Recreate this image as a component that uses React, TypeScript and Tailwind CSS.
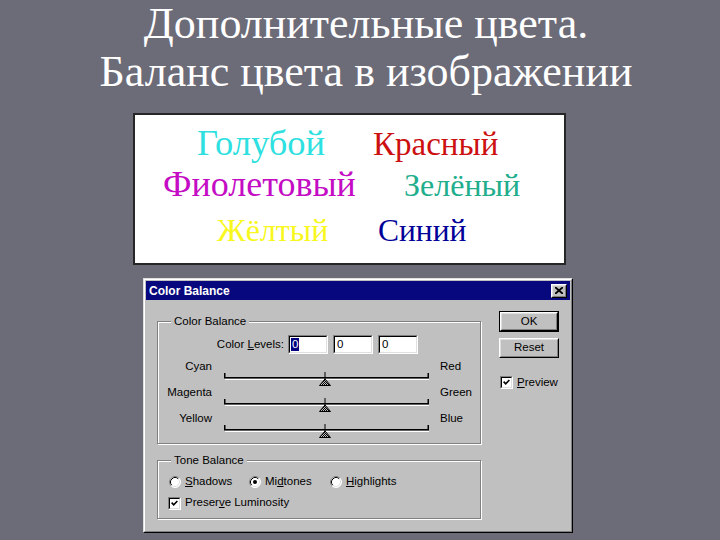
import React from "react";

function Raised({ children, className = "" }: { children: React.ReactNode; className?: string }) {
  return (
    <div className={`border border-t-white border-l-white border-r-black border-b-black ${className}`}>
      <div className="flex h-full w-full items-center justify-center border border-t-[#dfdfdf] border-l-[#dfdfdf] border-r-[#808080] border-b-[#808080] bg-[#c0c0c0]">
        {children}
      </div>
    </div>
  );
}

function Sunken({ children, className = "" }: { children: React.ReactNode; className?: string }) {
  return (
    <div className={`border border-t-[#808080] border-l-[#808080] border-r-white border-b-white ${className}`}>
      <div className="flex h-full w-full items-center border border-t-black border-l-black border-r-[#dfdfdf] border-b-[#dfdfdf] bg-white">
        {children}
      </div>
    </div>
  );
}

function Check() {
  return (
    <Sunken className="h-[13px] w-[13px] shrink-0">
      <svg width="11" height="11" viewBox="0 0 11 11">
        <polyline points="2,4.5 4.5,7 9,2.5" fill="none" stroke="#000" strokeWidth="2" strokeLinejoin="miter" />
      </svg>
    </Sunken>
  );
}

function Radio({ on = false }: { on?: boolean }) {
  return (
    <svg width="12" height="12" viewBox="0 0 12 12" className="shrink-0">
      <circle cx="6" cy="6" r="5.5" fill="#fff" />
      <path d="M2.11 9.89 A5.5 5.5 0 0 1 9.89 2.11" fill="none" stroke="#808080" />
      <path d="M9.89 2.11 A5.5 5.5 0 0 1 2.11 9.89" fill="none" stroke="#fff" />
      <path d="M2.82 9.18 A4.5 4.5 0 0 1 9.18 2.82" fill="none" stroke="#000" />
      <path d="M9.18 2.82 A4.5 4.5 0 0 1 2.82 9.18" fill="none" stroke="#dfdfdf" />
      {on && <circle cx="6" cy="6" r="2" fill="#000" />}
    </svg>
  );
}

function Slider({ id }: { id: string }) {
  return (
    <svg width="206" height="26" viewBox="0 0 206 26" className="shrink-0 overflow-visible">
      <defs>
        <pattern id={id} width="2" height="2" patternUnits="userSpaceOnUse">
          <rect width="2" height="2" fill="#c0c0c0" />
          <rect width="1" height="1" fill="#000" />
          <rect x="1" y="1" width="1" height="1" fill="#000" />
        </pattern>
      </defs>
      <rect x="0" y="19" width="205" height="1.5" fill="#000" />
      <rect x="1" y="21" width="204" height="1" fill="#fff" />
      <rect x="0" y="15" width="1.5" height="5" fill="#000" />
      <rect x="203.5" y="15" width="1.5" height="5" fill="#000" />
      <rect x="100.5" y="14" width="1" height="7" fill="#000" />
      <polygon points="95.5,27.5 101,21 106.5,27.5" fill={`url(#${id})`} stroke="#000" strokeWidth="1" />
    </svg>
  );
}

const sliders = [
  { left: "Cyan", right: "Red" },
  { left: "Magenta", right: "Green" },
  { left: "Yellow", right: "Blue" },
];

const groupCls =
  "border border-[#808080] shadow-[inset_1px_1px_0_#fff,1px_1px_0_#fff] m-0";
const legendCls = "ml-[13px] bg-[#c0c0c0] px-[3px] leading-[14px]";

export default function App() {
  return (
    <div className="h-[540px] w-[720px] overflow-hidden bg-[#6c6b78]">
      {/* slide title */}
      <div className="pl-[12px] text-center font-['Liberation_Serif','Times_New_Roman',serif] text-[44px] leading-[48px] text-white">
        <div>Дополнительные цвета.</div>
        <div>Баланс цвета в изображении</div>
      </div>

      {/* colour words */}
      <div className="ml-[133px] mt-[17px] h-[152px] w-[433px] border-2 border-[#262626] bg-white pt-[8px] font-['Liberation_Serif','Times_New_Roman',serif] leading-[40px]">
        <div className="grid h-[40px] grid-cols-[235px_1fr] items-baseline">
          <span className="pl-[62px] text-[36.5px] text-[#2fe0e0]">Голубой</span>
          <span className="pl-[3px] text-[33px] text-[#cc1010]">Красный</span>
        </div>
        <div className="mt-[1px] grid h-[40px] grid-cols-[235px_1fr] items-baseline">
          <span className="pl-[28px] text-[36px] text-[#c40cc4]">Фиолетовый</span>
          <span className="pl-[34px] text-[32px] text-[#20ae8c]">Зелёный</span>
        </div>
        <div className="mt-[6px] grid h-[40px] grid-cols-[235px_1fr] items-baseline">
          <span className="pl-[82px] text-[32px] text-[#f8f820]">Жёлтый</span>
          <span className="pl-[8px] text-[31.5px] text-[#000099]">Синий</span>
        </div>
      </div>

      {/* Color Balance dialog */}
      <div className="ml-[143px] mt-[13px] h-[255px] w-[430px] border border-t-[#dfdfdf] border-l-[#dfdfdf] border-r-black border-b-black font-['Liberation_Sans',Arial,sans-serif] text-[11.5px] text-black">
        <div className="flex h-full flex-col border border-t-white border-l-white border-r-[#808080] border-b-[#808080] bg-[#c0c0c0] p-px">
          <div className="flex h-[19px] items-center justify-between bg-[#08087e] pl-[3px] pr-[3px]">
            <span className="text-[12px] font-bold text-white">Color Balance</span>
            <Raised className="h-[14px] w-[16px]">
              <svg width="8" height="7" viewBox="0 0 8 7">
                <path d="M0 0 L8 7 M8 0 L0 7" stroke="#000" strokeWidth="1.8" />
              </svg>
            </Raised>
          </div>

          <div className="flex flex-1">
            <div className="flex flex-col pl-[11px] pt-[14px]">
              <fieldset className={`${groupCls} h-[130px] w-[324px] px-0`}>
                <legend className={legendCls}>Color Balance</legend>
                <div className="mt-[7px] flex h-[19px] items-center">
                  <span className="w-[130px] pr-[4px] text-right">
                    Color <span className="underline">L</span>evels:
                  </span>
                  <Sunken className="h-[19px] w-[40px]">
                    <span className="ml-[1px] bg-[#000080] px-px leading-[13px] text-white">0</span>
                  </Sunken>
                  <Sunken className="ml-[5px] h-[19px] w-[40px]">
                    <span className="ml-[2px]">0</span>
                  </Sunken>
                  <Sunken className="ml-[5px] h-[19px] w-[40px]">
                    <span className="ml-[2px]">0</span>
                  </Sunken>
                </div>
                <div className="mt-[4px] flex flex-col">
                  {sliders.map((s, i) => (
                    <div key={s.left} className="flex h-[26px]">
                      <span className="w-[54px] pt-px text-right leading-[14px]">{s.left}</span>
                      <div className="ml-[12px]">
                        <Slider id={`dither${i}`} />
                      </div>
                      <span className="ml-[10px] pt-px leading-[14px]">{s.right}</span>
                    </div>
                  ))}
                </div>
              </fieldset>

              <fieldset className={`${groupCls} mt-[9px] h-[66px] w-[324px] px-0`}>
                <legend className={legendCls}>Tone Balance</legend>
                <div className="mt-[8px] flex h-[14px] items-center pl-[11px]">
                  <div className="flex w-[80px] items-center gap-[4px]">
                    <Radio />
                    <span>
                      <span className="underline">S</span>hadows
                    </span>
                  </div>
                  <div className="flex w-[81px] items-center gap-[4px]">
                    <Radio on />
                    <span>
                      Mi<span className="underline">d</span>tones
                    </span>
                  </div>
                  <div className="flex items-center gap-[4px]">
                    <Radio />
                    <span>
                      <span className="underline">H</span>ighlights
                    </span>
                  </div>
                </div>
                <div className="mt-[7px] flex h-[14px] items-center gap-[4px] pl-[10px]">
                  <Check />
                  <span>
                    Preser<span className="underline">v</span>e Luminosity
                  </span>
                </div>
              </fieldset>
            </div>

            <div className="ml-[18px] flex flex-col pt-[11px]">
              <div className="h-[21px] w-[60px] border border-black">
                <Raised className="h-full w-full">OK</Raised>
              </div>
              <Raised className="mt-[6px] h-[20px] w-[60px]">Reset</Raised>
              <div className="mt-[16px] flex items-center gap-[4px] pl-px">
                <Check />
                <span>
                  <span className="underline">P</span>review
                </span>
              </div>
            </div>
          </div>
        </div>
      </div>
    </div>
  );
}
